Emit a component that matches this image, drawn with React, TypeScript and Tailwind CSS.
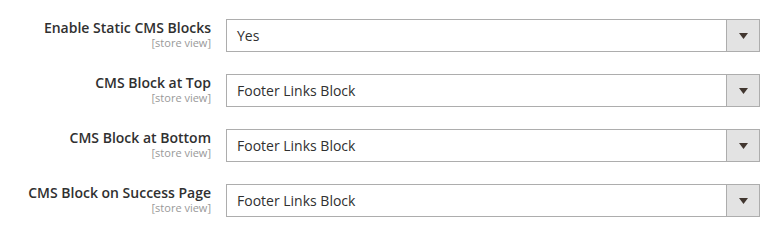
const rows = [
  { label: 'Enable Static CMS Blocks', value: 'Yes' },
  { label: 'CMS Block at Top', value: 'Footer Links Block' },
  { label: 'CMS Block at Bottom', value: 'Footer Links Block' },
  { label: 'CMS Block on Success Page', value: 'Footer Links Block' },
];

function SelectBox({ value }: { value: string }) {
  return (
    <div className="flex h-[33px] w-[534px] border border-[#adadad] bg-white">
      <div className="flex flex-1 items-center pl-[10px] text-[14px] text-[#303030]">{value}</div>
      <div className="flex w-[33px] items-center justify-center border-l border-[#adadad] bg-[#e3e3e3]">
        <svg width="9" height="6" viewBox="0 0 9 6">
          <path d="M0 0H9L4.5 6Z" fill="#41362f" />
        </svg>
      </div>
    </div>
  );
}

export default function App() {
  return (
    <div className="flex h-[234px] w-[782px] flex-col gap-[22px] bg-white pt-[19px] font-['Open_Sans',sans-serif]">
      {rows.map((row) => (
        <div key={row.label} className="flex gap-[15px]">
          <div className="flex w-[211px] flex-col items-end text-right">
            <span className="text-[14px] font-semibold leading-[17px] text-[#303030]">{row.label}</span>
            <span className="text-[11px] leading-[13px] text-[#999999]">[store view]</span>
          </div>
          <SelectBox value={row.value} />
        </div>
      ))}
    </div>
  );
}
